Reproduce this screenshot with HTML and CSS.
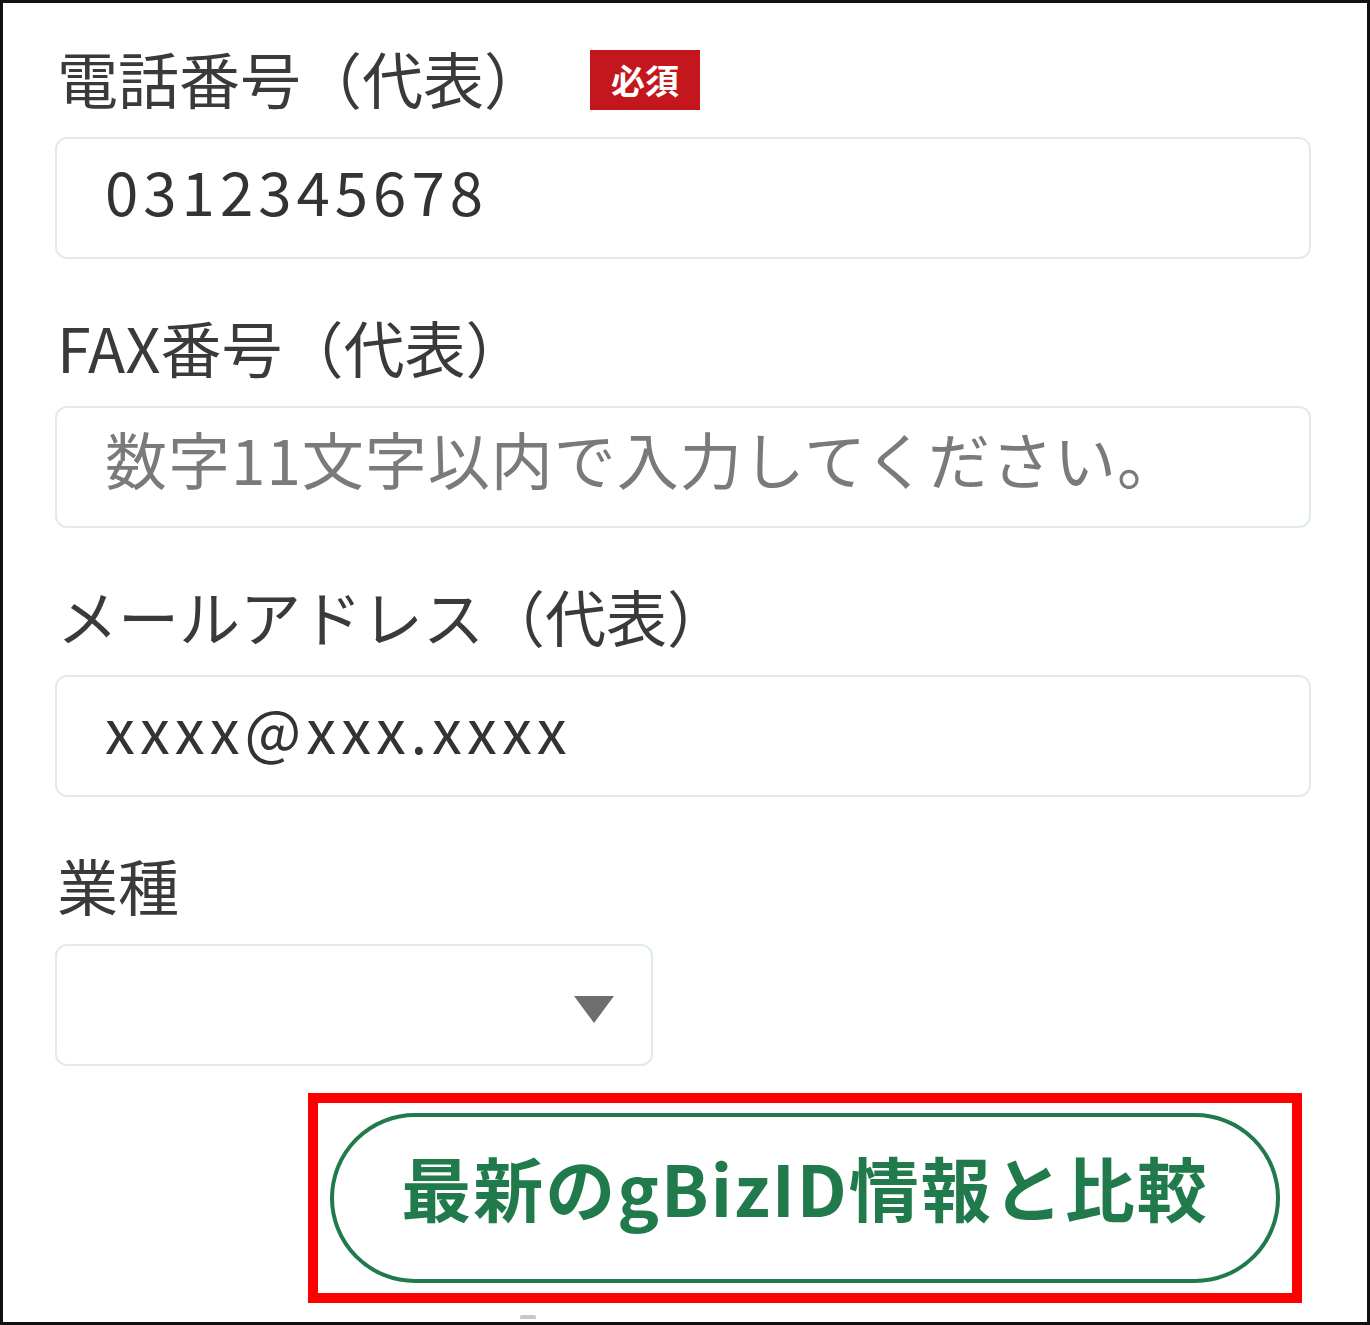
FILE: index.html
```html
<!DOCTYPE html>
<html>
  <head>
    <meta charset="utf-8" />
    <title>代表連絡先</title>
    <link rel="stylesheet" href="styles.css">
  </head>
  <body>
    <div class="frame">
      <!-- 電話番号 -->
      <div class="field">
        <div class="field-label">
          <span>電話番号（代表）</span>
          <span class="badge-required">必須</span>
        </div>
        <div class="text-input">0312345678</div>
      </div>

      <!-- FAX番号 -->
      <div class="field">
        <div class="field-label"><span>FAX番号（代表）</span></div>
        <div class="text-input placeholder">数字11文字以内で入力してください。</div>
      </div>

      <!-- メール -->
      <div class="field">
        <div class="field-label"><span>メールアドレス（代表）</span></div>
        <div class="text-input">xxxx@xxx.xxxx</div>
      </div>

      <!-- 業種 -->
      <div class="field field-last">
        <div class="field-label"><span>業種</span></div>
        <div class="select-input">
          <span class="select-arrow"></span>
        </div>
      </div>

      <div class="compare-box">
        <button class="compare-button" type="button">最新のgBizID情報と比較</button>
      </div>
      <div class="cut-mark"></div>
    </div>
  </body>
</html>
```

FILE: styles.css
```css
* {
  margin: 0;
  padding: 0;
  box-sizing: border-box;
}

body {
  font-family: "Noto Sans CJK JP", "Noto Sans", sans-serif;
  background-color: #fff;
  color: #333;
}

.frame {
  width: 1370px;
  height: 1325px;
  border: 3px solid #111;
  padding: 45px 0 0 52px;
  overflow: hidden;
  position: relative;
}

.field {
  margin-bottom: 58px;
}

.field-last {
  margin-bottom: 27px;
}

.field-label {
  display: flex;
  align-items: center;
  height: 60px;
  margin-bottom: 29px;
  font-size: 61px;
  line-height: 60px;
  color: #3a3a3a;
  padding-left: 2px;
}

.badge-required {
  display: inline-flex;
  align-items: center;
  justify-content: center;
  width: 110px;
  height: 60px;
  margin-left: 45px;
  margin-top: 4px;
  background-color: #c3171d;
  color: #fff;
  font-size: 34px;
  font-weight: bold;
  line-height: 1;
}

.text-input {
  width: 1256px;
  height: 122px;
  border: 2px solid #e1ece9;
  border-radius: 12px;
  padding: 0 0 18px 48px;
  display: flex;
  align-items: center;
  font-size: 60px;
  color: #333;
  letter-spacing: 5px;
}

.text-input.placeholder {
  color: #7a7a7a;
  font-size: 62px;
  letter-spacing: 1px;
}

.select-input {
  width: 598px;
  height: 122px;
  border: 2px solid #e1ece9;
  border-radius: 12px;
  display: flex;
  align-items: center;
  justify-content: flex-end;
  padding-right: 37px;
}

.select-arrow {
  width: 0;
  height: 0;
  border-left: 20px solid transparent;
  border-right: 20px solid transparent;
  border-top: 27px solid #6e6e6e;
  margin-top: 8px;
}

.compare-box {
  margin-left: 253px;
  width: 994px;
  height: 210px;
  border: 10px solid #ff0000;
  padding: 10px 12px;
}

.compare-button {
  width: 100%;
  height: 100%;
  border: 4px solid #217a4b;
  border-radius: 85px;
  background-color: #fff;
  color: #217a4b;
  font-family: "Noto Sans CJK JP", "Noto Sans", sans-serif;
  font-size: 70px;
  font-weight: bold;
  letter-spacing: 2px;
  padding-bottom: 24px;
}

.cut-mark {
  width: 16px;
  height: 4px;
  margin: 12px 0 0 465px;
  background-color: #c8c8c8;
  border-radius: 2px 2px 0 0;
}
```
